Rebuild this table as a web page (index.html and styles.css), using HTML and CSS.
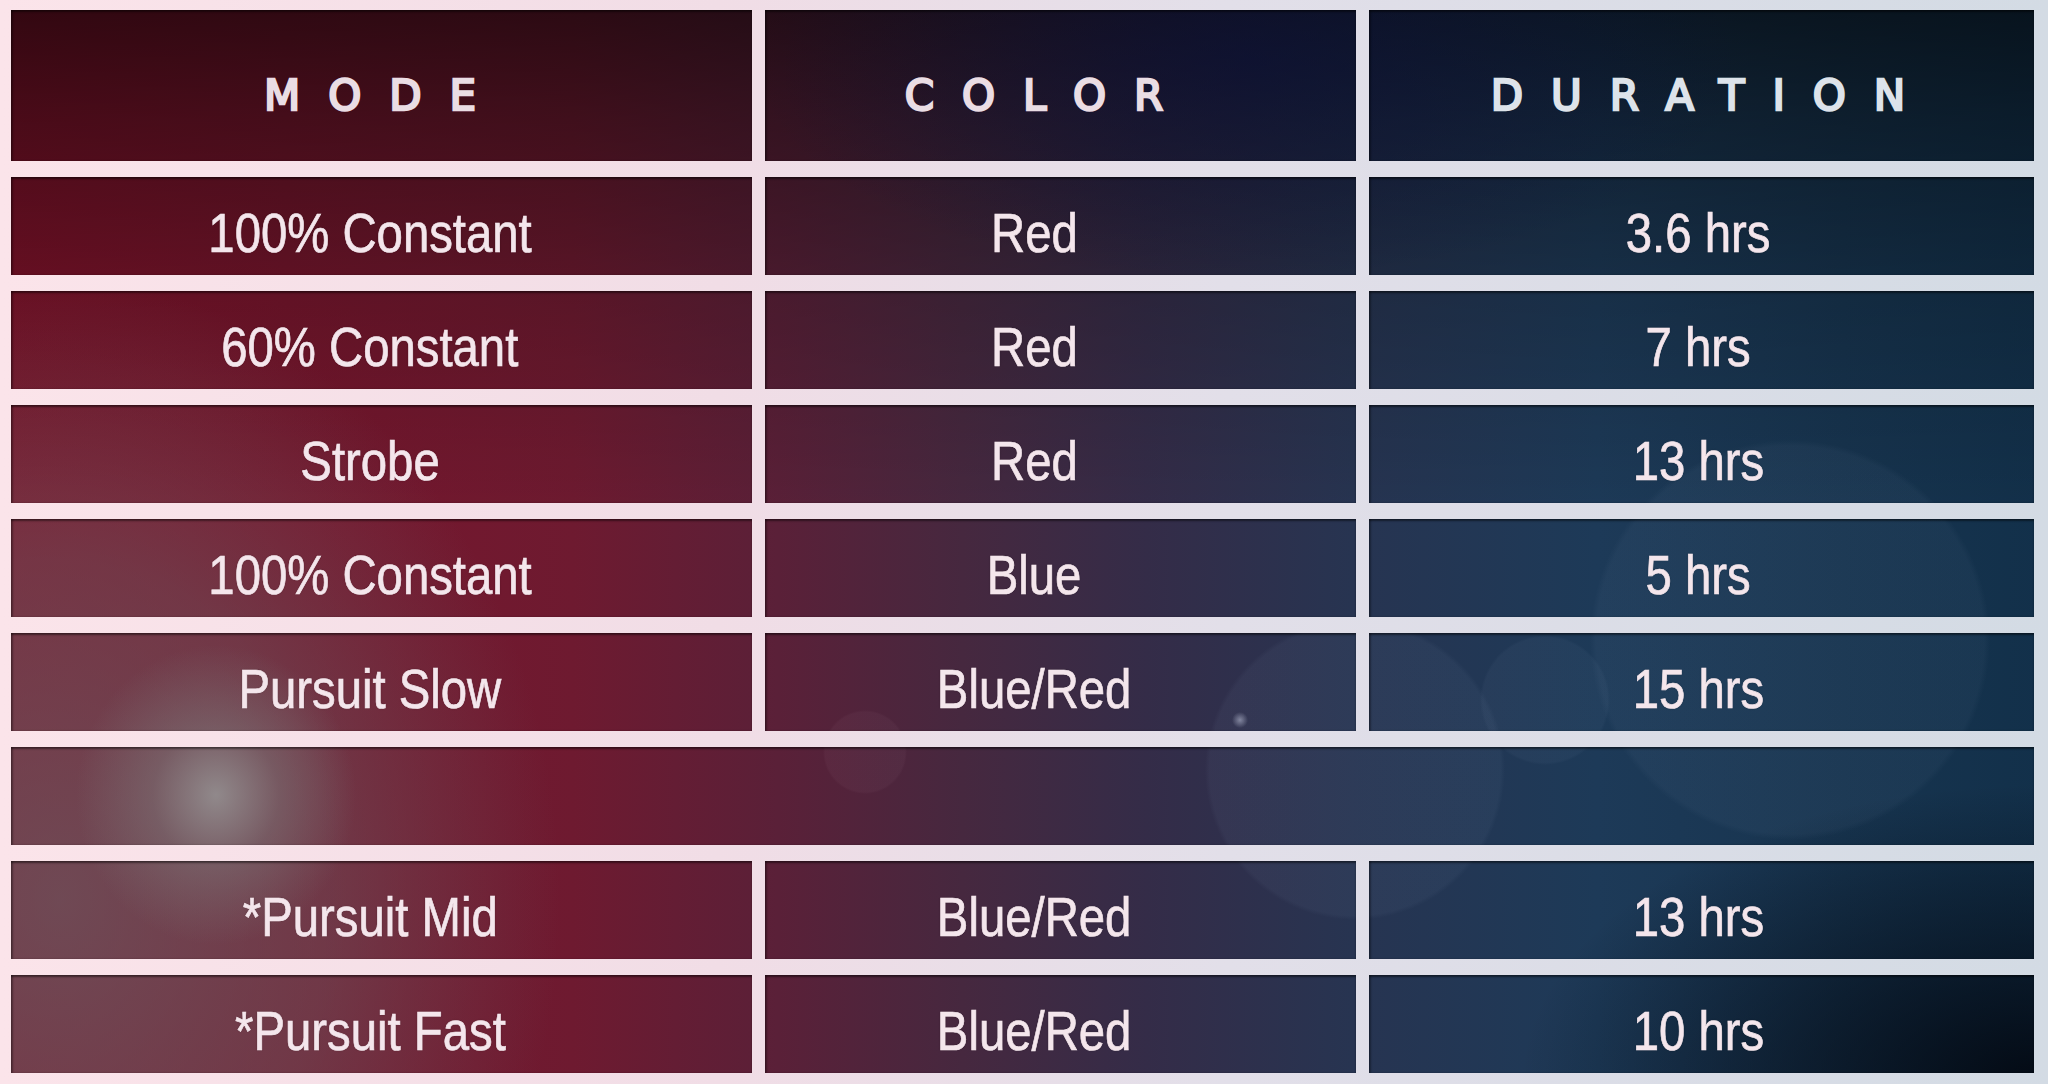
FILE: index.html
```html
<!DOCTYPE html>
<html lang="en">
<head>
<meta charset="utf-8">
<title>Modes</title>
<link rel="stylesheet" href="styles.css">
</head>
<body>
<div class="table">
  <div class="cell head c1"><span>MODE</span></div>
  <div class="cell head c2"><span>COLOR</span></div>
  <div class="cell head c3"><span>DURATION</span></div>

  <div class="cell c1"><span>100% Constant</span></div>
  <div class="cell c2"><span>Red</span></div>
  <div class="cell c3"><span>3.6 hrs</span></div>

  <div class="cell c1"><span>60% Constant</span></div>
  <div class="cell c2"><span>Red</span></div>
  <div class="cell c3"><span>7 hrs</span></div>

  <div class="cell c1"><span>Strobe</span></div>
  <div class="cell c2"><span>Red</span></div>
  <div class="cell c3"><span>13 hrs</span></div>

  <div class="cell c1"><span>100% Constant</span></div>
  <div class="cell c2"><span>Blue</span></div>
  <div class="cell c3"><span>5 hrs</span></div>

  <div class="cell c1"><span>Pursuit Slow</span></div>
  <div class="cell c2"><span>Blue/Red</span></div>
  <div class="cell c3"><span>15 hrs</span></div>

  <div class="cell spacer"></div>

  <div class="cell c1"><span>*Pursuit Mid</span></div>
  <div class="cell c2"><span>Blue/Red</span></div>
  <div class="cell c3"><span>13 hrs</span></div>

  <div class="cell c1"><span>*Pursuit Fast</span></div>
  <div class="cell c2"><span>Blue/Red</span></div>
  <div class="cell c3"><span>10 hrs</span></div>
</div>
</body>
</html>
```

FILE: styles.css
```css
html, body {
  margin: 0;
  padding: 0;
}

body {
  width: 2048px;
  height: 1084px;
  overflow: hidden;
  background: linear-gradient(90deg, #fbe4ea 0%, #f1dde6 35%, #e2dfe9 60%, #d3dbe4 100%);
  font-family: "Liberation Sans", Arial, sans-serif;
}

.table {
  box-sizing: border-box;
  width: 2048px;
  height: 1084px;
  padding: 10px 14px 10px 11px;
  display: grid;
  grid-template-columns: 741px 591px 665px;
  grid-template-rows: 151px repeat(8, 98px);
  column-gap: 13px;
  row-gap: 16px;
}

.cell {
  box-sizing: border-box;
  display: flex;
  align-items: center;
  justify-content: center;
  padding-top: 14px;
  color: #f4e6ec;
  font-size: 55px;
  line-height: 1;
  -webkit-text-stroke: 0.7px #f4e6ec;
  text-shadow: 0 0 2px rgba(0, 0, 0, 0.35);
  box-shadow: inset 0 2px 2px rgba(0, 0, 0, 0.45), inset 2px 0 2px rgba(0, 0, 0, 0.3);
  background-attachment: fixed;
  background-image:
    radial-gradient(ellipse 520px 300px at 2040px 1084px, rgba(2, 6, 14, 0.9) 0%, rgba(2, 6, 14, 0.5) 45%, rgba(2, 6, 14, 0) 100%),
    radial-gradient(circle 150px at 1355px 770px, rgba(150, 170, 200, 0.06) 0, rgba(150, 170, 200, 0.06) 97%, rgba(150, 170, 200, 0) 100%),
    radial-gradient(circle 200px at 1790px 640px, rgba(150, 170, 200, 0.05) 0, rgba(150, 170, 200, 0.05) 97%, rgba(150, 170, 200, 0) 100%),
    radial-gradient(circle 65px at 1545px 700px, rgba(150, 170, 200, 0.05) 0, rgba(150, 170, 200, 0.05) 96%, rgba(150, 170, 200, 0) 100%),
    radial-gradient(circle 42px at 865px 752px, rgba(200, 160, 180, 0.05) 0, rgba(200, 160, 180, 0.05) 95%, rgba(200, 160, 180, 0) 100%),
    radial-gradient(circle 8px at 1240px 720px, rgba(230, 235, 255, 0.45) 0, rgba(230, 235, 255, 0) 100%),
    radial-gradient(ellipse 140px 150px at 216px 795px, rgba(150, 150, 150, 0.85) 0%, rgba(125, 120, 122, 0.5) 45%, rgba(110, 100, 105, 0) 100%),
    radial-gradient(ellipse 500px 620px at 60px 900px, rgba(105, 96, 102, 0.7) 0%, rgba(105, 96, 102, 0.45) 55%, rgba(105, 96, 102, 0) 100%),
    radial-gradient(ellipse 500px 220px at 1250px 60px, rgba(8, 14, 60, 0.5) 0%, rgba(8, 14, 60, 0) 100%),
    linear-gradient(180deg, rgba(0, 0, 0, 0.62) 0px, rgba(0, 0, 0, 0.42) 120px, rgba(0, 0, 0, 0.18) 300px, rgba(0, 0, 0, 0) 520px),
    linear-gradient(90deg, #80122a 0%, #6e1a30 28%, #5a2038 38%, #46283f 47%, #342c48 56%, #273451 66%, #1d3a58 78%, #17344f 90%, #12304a 100%);
}

.cell span {
  display: inline-block;
  transform: scaleX(0.86);
  white-space: nowrap;
}

.c1 { padding-right: 23px; }
.c2 { padding-right: 53px; }
.c3 { padding-right: 7px; }

.head {
  padding-top: 21px;
  font-family: "DejaVu Sans", "Liberation Sans", sans-serif;
  font-weight: normal;
  font-size: 42px;
  letter-spacing: 28px;
  color: #eadde4;
  -webkit-text-stroke: 2.4px #eadde4;
}

.head span {
  transform: none;
}

.head.c1 { padding-left: 28px; }
.head.c2 { padding-left: 28px; }
.head.c3 { padding-left: 28px; color: #dde3ea; -webkit-text-stroke-color: #dde3ea; }

.spacer {
  grid-column: 1 / -1;
}
```
